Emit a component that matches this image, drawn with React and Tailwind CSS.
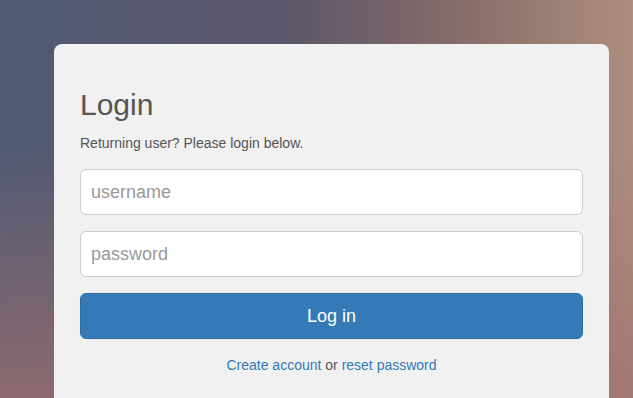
export default function App() {
  return (
    <div className="w-[633px] h-[398px] overflow-hidden bg-[linear-gradient(to_bottom,rgba(0,0,0,0)_35%,rgba(160,112,110,0.75)),linear-gradient(to_right,#4f5a74,#5b566a_45%,#8a6f6a_75%,#ad8e80)] pt-[44px] pl-[54px] font-['Liberation_Sans',Arial,sans-serif]">
      <div className="w-[555px] h-[400px] bg-[#f1f1f1] rounded-t-[8px] px-[26px] pt-[44px]">
        <h2 className="text-[30px] leading-[33px] text-[#555] font-normal">Login</h2>
        <p className="mt-[12px] text-[14px] leading-[20px] text-[#555]">Returning user? Please login below.</p>
        <input
          className="mt-[16px] block w-full h-[46px] rounded-[6px] border border-[#ccc] bg-white px-[10px] text-[18px] text-[#555] placeholder:text-[#999] outline-none"
          placeholder="username"
        />
        <input
          type="password"
          className="mt-[16px] block w-full h-[46px] rounded-[6px] border border-[#ccc] bg-white px-[10px] text-[18px] text-[#555] placeholder:text-[#999] outline-none"
          placeholder="password"
        />
        <button className="mt-[16px] block w-full h-[46px] rounded-[6px] border border-[#2e6da4] bg-[#337ab7] text-white text-[18px]">
          Log in
        </button>
        <p className="mt-[16px] text-center text-[14px] leading-[20px] text-[#555]">
          <a className="text-[#337ab7]">Create account</a> or <a className="text-[#337ab7]">reset password</a>
        </p>
      </div>
    </div>
  );
}
